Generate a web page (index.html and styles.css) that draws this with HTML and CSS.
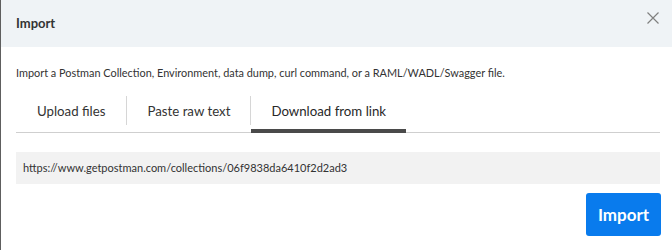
FILE: index.html
```html
<!DOCTYPE html>
<html>
<head>
<meta charset="utf-8">
<link rel="stylesheet" href="styles.css">
</head>
<body>
<div class="modal">
  <div class="header">
    <div class="title">Import</div>
    <svg class="close" width="12" height="12" viewBox="0 0 12 12"><path d="M0.5 0.5L11.5 11.5M11.5 0.5L0.5 11.5" stroke="#808080" stroke-width="1.2" fill="none"/></svg>
  </div>
  <div class="body">
    <p class="desc">Import a Postman Collection, Environment, data dump, curl command, or a RAML/WADL/Swagger file.</p>
    <div class="tabs">
      <div class="tab">Upload files</div>
      <div class="tab">Paste raw text</div>
      <div class="tab active">Download from link</div>
    </div>
    <div class="input">https://www.getpostman.com/collections/06f9838da6410f2d2ad3</div>
    <div class="actions">
      <button class="btn">Import</button>
    </div>
  </div>
</div>
</body>
</html>
```
FILE: styles.css
```css
html, body {
  margin: 0;
  padding: 0;
  background: #ffffff;
}
body {
  font-family: Lato, "Open Sans", sans-serif;
  color: #333333;
}
.modal {
  width: 672px;
  height: 250px;
  box-sizing: border-box;
  border-left: 1px solid #5e5e5e;
  background: #ffffff;
}
.header {
  height: 47px;
  background: #eff3f6;
  display: flex;
  align-items: center;
  justify-content: space-between;
  padding: 0 12px 0 15px;
}
.title {
  font-size: 13px;
  font-weight: 700;
  color: #333333;
  margin-top: -1px;
}
.close {
  margin-top: -11px;
  margin-right: 1px;
}
.body {
  padding: 0 12px 0 15px;
}
.desc {
  margin: 0;
  padding-top: 19px;
  font-size: 10.9px;
  line-height: 14px;
  color: #333333;
}
.tabs {
  display: flex;
  margin-top: 16px;
  border-bottom: 1px solid #cfcfcf;
  height: 36px;
  box-sizing: content-box;
}
.tab {
  font-size: 13.25px;
  color: #333333;
  padding: 0 20px;
  display: flex;
  align-items: center;
  position: relative;
  height: 29px;
  border-right: 1px solid #d6d6d6;
}
.tab:first-child {
  padding-left: 21px;
  padding-right: 21px;
}
.tab:last-child {
  border-right: none;
}
.tab.active {
  color: #282828;
}
.tab.active::after {
  content: "";
  position: absolute;
  left: 0;
  right: 0;
  top: 33px;
  height: 4px;
  background: #4a4a4a;
}
.input {
  margin-top: 19px;
  height: 32px;
  background: #f2f2f2;
  font-size: 11px;
  line-height: 32px;
  padding-left: 7px;
  color: #333333;
}
.actions {
  display: flex;
  justify-content: flex-end;
  margin-top: 9px;
}
.btn {
  width: 75px;
  height: 43px;
  border: none;
  border-radius: 3px;
  background: #097bed;
  color: #ffffff;
  font-family: Lato, "Open Sans", sans-serif;
  font-size: 17px;
  font-weight: 700;
  padding: 0;
  margin-right: -1px;
}
```
